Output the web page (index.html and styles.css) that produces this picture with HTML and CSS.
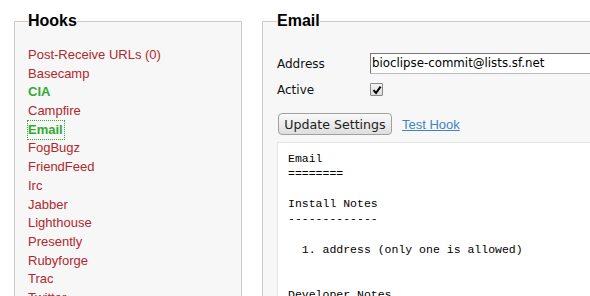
FILE: index.html
```html
<!DOCTYPE html>
<html>
<head>
<meta charset="utf-8">
<link rel="stylesheet" href="styles.css">
</head>
<body>
<div class="page">
  <fieldset class="box hooks">
    <legend>Hooks</legend>
    <ul class="hook-list">
      <li><a class="hook">Post-Receive URLs (0)</a></li>
      <li><a class="hook">Basecamp</a></li>
      <li><a class="hook on">CIA</a></li>
      <li><a class="hook">Campfire</a></li>
      <li><a class="hook on focus">Email</a></li>
      <li><a class="hook">FogBugz</a></li>
      <li><a class="hook">FriendFeed</a></li>
      <li><a class="hook">Irc</a></li>
      <li><a class="hook">Jabber</a></li>
      <li><a class="hook">Lighthouse</a></li>
      <li><a class="hook">Presently</a></li>
      <li><a class="hook">Rubyforge</a></li>
      <li><a class="hook">Trac</a></li>
      <li><a class="hook">Twitter</a></li>
    </ul>
  </fieldset>
  <fieldset class="box editor">
    <legend>Email</legend>
    <div class="form">
      <label class="lbl">Address</label>
      <div class="field">bioclipse-commit@lists.sf.net</div>
      <label class="lbl">Active</label>
      <span class="check"><svg width="10" height="10" viewBox="0 0 10 10"><path d="M1.5 5.2 L4 8 L8.6 1.6" fill="none" stroke="#000" stroke-width="2"/></svg></span>
    </div>
    <div class="actions">
      <button class="btn">Update Settings</button>
      <a class="test">Test Hook</a>
    </div>
    <pre class="docs">Email
========

Install Notes
-------------

  1. address (only one is allowed)


Developer Notes
---------------</pre>
  </fieldset>
</div>
</body>
</html>
```
FILE: styles.css
```css
html, body {
  margin: 0;
  padding: 0;
  background: #fff;
  overflow: hidden;
  width: 590px;
  height: 296px;
}
.page {
  display: flex;
  gap: 20px;
  padding-left: 14px;
  padding-top: 12px;
  width: 900px;
  align-items: flex-start;
}
.box {
  margin: 0;
  border: 1px solid #cccccc;
  background: #f7f7f7;
  min-width: 0;
}
.box legend {
  padding: 0;
  font-family: "Liberation Sans", Arial, sans-serif;
  font-weight: bold;
  font-size: 16px;
  line-height: 18px;
  color: #000;
}
.hooks {
  width: 200px;
  height: 320px;
  padding: 16px 13px 0 13px;
}
.hook-list {
  list-style: none;
  margin: 0;
  padding: 0;
}
.hook-list li {
  font-family: "Liberation Sans", Arial, sans-serif;
  font-size: 13px;
  line-height: 18.7px;
  height: 18.7px;
}
.hook {
  color: #b0282d;
}
.hook.on {
  color: #33aa33;
  font-weight: bold;
}
.hook.focus {
  display: inline-block;
  outline: 1px dotted #33aa33;
  outline-offset: 0;
  padding-right: 1px;
}
.editor {
  width: 600px;
  height: 320px;
  padding: 23px 14px 0 14px;
}
.form {
  display: grid;
  grid-template-columns: 93px 1fr;
  row-gap: 9px;
  align-items: center;
  font-family: "DejaVu Sans", sans-serif;
  font-size: 12px;
}
.lbl {
  color: #111;
}
.field {
  height: 19px;
  line-height: 19px;
  border: 1px solid #777;
  border-right-color: #bbb;
  border-bottom-color: #bbb;
  background: #fff;
  padding-left: 1px;
  font-size: 11.8px;
  color: #000;
}
.check {
  width: 11px;
  height: 11px;
  border: 1px solid #8a8a8a;
  border-radius: 1px;
  background: linear-gradient(#f4f4f4, #dcdcdc);
  display: flex;
  align-items: center;
  justify-content: center;
  margin-top: -1px;
}
.actions {
  display: flex;
  align-items: center;
  gap: 10px;
  margin-top: 16px;
  margin-left: 1px;
}
.btn {
  font-family: "DejaVu Sans", sans-serif;
  font-size: 12.6px;
  color: #222;
  height: 22px;
  width: 114px;
  padding: 0;
  border: 1px solid #a0a0a0;
  border-radius: 4px;
  background: linear-gradient(#fafafa, #dedede);
}
.test {
  font-family: "Liberation Sans", Arial, sans-serif;
  font-size: 13px;
  color: #4183c4;
  text-decoration: underline;
}
.docs {
  margin: 7px 0 0 0;
  background: #fff;
  border: 1px solid #e6e6e6;
  padding: 8px 10px;
  font-family: "Courier New", "Nimbus Mono PS", "FreeMono", "Liberation Mono", monospace;
  font-size: 11.5px;
  line-height: 15.1px;
  color: #000;
}
```
